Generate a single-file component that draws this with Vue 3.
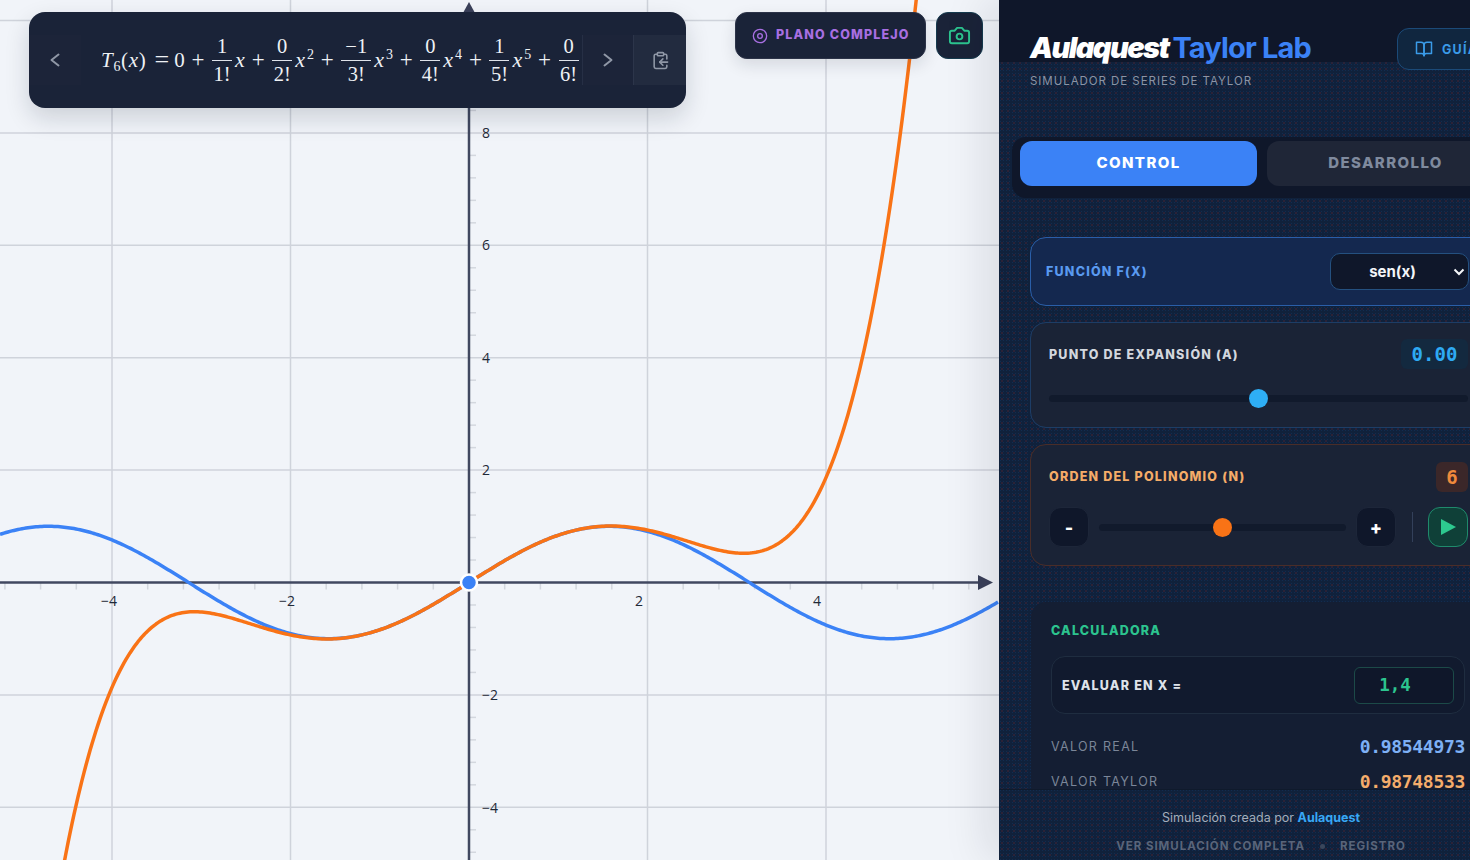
<script setup>
import { ref } from "vue";

const W = 999;
const H = 860;
const OX = 469;
const OY = 582.5;
const SX = 89.25;
const SY = 56.2;

const fn = ref("sen(x)");
const a = ref(0);
const n = ref(6);
const evalX = ref("1,4");

const terms = [
  { num: "1", den: "1!", pow: "" },
  { num: "0", den: "2!", pow: "2" },
  { num: "−1", den: "3!", pow: "3" },
  { num: "0", den: "4!", pow: "4" },
  { num: "1", den: "5!", pow: "5" },
];

function curve(f) {
  let d = "";
  for (let px = 0; px <= W; px += 2) {
    const x = (px - OX) / SX;
    const y = Math.max(-60, Math.min(H + 60, OY - f(x) * SY));
    d += (px === 0 ? "M" : "L") + px + " " + y.toFixed(2);
  }
  return d;
}

const sinPath = curve(Math.sin);
const taylorPath = curve((x) => x - x ** 3 / 6 + x ** 5 / 120);

const gridX = [-4, -2, 2, 4].map((v) => OX + v * SX);
const gridY = [10, 8, 6, 4, 2, -2, -4].map((v) => OY - v * SY);

const ticksX = [];
for (let i = -13; i <= 14; i++) {
  if (i !== 0 && i % 5 !== 0) ticksX.push(OX + i * 0.4 * SX);
}
const ticksY = [];
for (let i = -12; i <= 25; i++) {
  if (i !== 0 && i % 5 !== 0) ticksY.push(OY - i * 0.4 * SY);
}

const labelsX = [
  { t: "−4", x: 109 },
  { t: "−2", x: 287 },
  { t: "2", x: 639 },
  { t: "4", x: 817 },
];
const labelsY = [
  { t: "8", x: 486, y: 133 },
  { t: "6", x: 486, y: 245 },
  { t: "4", x: 486, y: 358 },
  { t: "2", x: 486, y: 470 },
  { t: "−2", x: 490, y: 695 },
  { t: "−4", x: 490, y: 808 },
];
</script>

<template>
  <div class="page">
    <main class="canvas">
      <svg class="graph" :width="W" :height="H" :viewBox="`0 0 ${W} ${H}`">
        <line v-for="x in gridX" :key="x" :x1="x" :x2="x" y1="0" :y2="H" class="grid" />
        <line v-for="y in gridY" :key="y" x1="0" :x2="W" :y1="y" :y2="y" class="grid" />
        <line v-for="x in ticksX" :key="x" :x1="x" :x2="x" :y1="OY" :y2="OY + 7" class="tick" />
        <line v-for="y in ticksY" :key="y" :x1="OX" :x2="OX + 7" :y1="y" :y2="y" class="tick" />
        <line x1="0" :x2="980" :y1="OY" :y2="OY" class="axis" />
        <line :x1="OX" :x2="OX" y1="10" :y2="H" class="axis" />
        <polygon points="978,575 993,582.5 978,590" class="arrow" />
        <polygon points="469,2 463,13 475,13" class="arrow" />
        <text v-for="l in labelsX" :key="l.t" :x="l.x" y="606" class="num">{{ l.t }}</text>
        <text v-for="l in labelsY" :key="l.t" :x="l.x" :y="l.y + 5" class="num">{{ l.t }}</text>
        <path :d="sinPath" class="line-sin" />
        <path :d="taylorPath" class="line-taylor" />
        <circle :cx="OX" :cy="OY" r="8" class="origin" />
      </svg>

      <div class="overlay">
        <div class="formula-card">
          <button class="f-btn" type="button">
            <svg width="24" height="24" viewBox="0 0 24 24"><path d="M15.5 6.5 8.5 12l7 5.5" /></svg>
          </button>
          <div class="formula">
            <span class="m-t"><i>T</i><sub>6</sub>(<i>x</i>)</span>
            <span class="eq">=</span>
            <span class="zero">0</span>
            <template v-for="t in terms" :key="t.den">
              <span class="plus">+</span>
              <span class="frac">
                <span class="fnum">{{ t.num }}</span>
                <span class="fden">{{ t.den }}</span>
              </span>
              <span class="xvar"><i>x</i><sup v-if="t.pow">{{ t.pow }}</sup></span>
            </template>
            <span class="plus">+</span>
            <span class="frac">
              <span class="fnum">0</span>
              <span class="fden">6!</span>
            </span>
          </div>
          <button class="f-btn f-next" type="button">
            <svg width="24" height="24" viewBox="0 0 24 24"><path d="M8.5 6.5 15.5 12l-7 5.5" /></svg>
          </button>
          <button class="f-btn f-copy" type="button">
            <svg width="19" height="19" viewBox="0 0 24 24">
              <rect x="8" y="2" width="8" height="4" rx="1" ry="1" />
              <path d="M8 4H6a2 2 0 0 0-2 2v14a2 2 0 0 0 2 2h12a2 2 0 0 0 2-2v-2" />
              <path d="M16 4h2a2 2 0 0 1 2 2v4" />
              <path d="M21 14H11" />
              <path d="m15 10-4 4 4 4" />
            </svg>
          </button>
        </div>
        <div class="tools">
          <button class="plano" type="button">
            <svg width="16" height="16" viewBox="0 0 24 24">
              <circle cx="12" cy="12" r="10" />
              <circle cx="12" cy="12" r="3.5" />
            </svg>
            <span>PLANO COMPLEJO</span>
          </button>
          <button class="camera" type="button">
            <svg width="23" height="23" viewBox="0 0 24 24">
              <path d="M14.5 4h-5L7 7H4a2 2 0 0 0-2 2v9a2 2 0 0 0 2 2h16a2 2 0 0 0 2-2V9a2 2 0 0 0-2-2h-3l-2.5-3z" />
              <circle cx="12" cy="13" r="3" />
            </svg>
          </button>
        </div>
      </div>
    </main>

    <aside class="panel">
      <header class="head">
        <div>
          <h1 class="title"><em>Aulaquest</em><span>Taylor Lab</span></h1>
          <p class="subtitle">SIMULADOR DE SERIES DE TAYLOR</p>
        </div>
        <button class="guide" type="button">
          <svg width="18" height="18" viewBox="0 0 24 24">
            <path d="M2 3h6a4 4 0 0 1 4 4v14a3 3 0 0 0-3-3H2z" />
            <path d="M22 3h-6a4 4 0 0 0-4 4v14a3 3 0 0 1 3-3h7z" />
          </svg>
          GUÍA
        </button>
      </header>

      <div class="tabs">
        <button class="tab active" type="button">CONTROL</button>
        <button class="tab" type="button">DESARROLLO</button>
      </div>

      <div class="scroll">
        <section class="card card-fn">
          <label class="lbl lbl-fn">FUNCIÓN F(X)</label>
          <div class="select-wrap">
            <select v-model="fn" class="select">
              <option>sen(x)</option>
              <option>cos(x)</option>
              <option>e^x</option>
            </select>
            <svg class="select-chev" width="12" height="12" viewBox="0 0 12 12"><path d="M1.5 3.5 6 8l4.5-4.5" /></svg>
          </div>
        </section>

        <section class="card card-a">
          <div class="row">
            <span class="lbl lbl-a">PUNTO DE EXPANSIÓN (A)</span>
            <span class="val val-a">{{ Number(a).toFixed(2) }}</span>
          </div>
          <input v-model="a" class="range range-a" type="range" min="-5" max="5" step="0.01" />
        </section>

        <section class="card card-n">
          <div class="row">
            <span class="lbl lbl-n">ORDEN DEL POLINOMIO (N)</span>
            <span class="val val-n">{{ n }}</span>
          </div>
          <div class="n-ctrl">
            <button class="step" type="button" @click="n = Math.max(0, Number(n) - 1)">-</button>
            <input v-model="n" class="range range-n" type="range" min="0" max="12" step="1" />
            <button class="step" type="button" @click="n = Math.min(12, Number(n) + 1)">+</button>
            <span class="sep"></span>
            <button class="play" type="button">
              <svg width="18" height="18" viewBox="0 0 18 18"><polygon points="2,1 17,9 2,17" /></svg>
            </button>
          </div>
        </section>

        <section class="calc">
          <h2 class="calc-title">CALCULADORA</h2>
          <div class="eval">
            <span class="eval-lbl">EVALUAR EN X =</span>
            <input v-model="evalX" class="eval-in" type="text" />
          </div>
          <div class="res">
            <span>VALOR REAL</span>
            <b class="res-real">0.98544973</b>
          </div>
          <div class="res">
            <span>VALOR TAYLOR</span>
            <b class="res-taylor">0.98748533</b>
          </div>
        </section>
      </div>

      <footer class="foot">
        <p class="credit">Simulación creada por <b>Aulaquest</b></p>
        <p class="links">
          <span>VER SIMULACIÓN COMPLETA</span>
          <i class="dot"></i>
          <span>REGISTRO</span>
        </p>
      </footer>
    </aside>
  </div>
</template>

<style scoped>
.page {
  display: flex;
  width: 1470px;
  height: 860px;
  overflow: hidden;
  font-family: Inter, "Liberation Sans", sans-serif;
  background: #f1f4f9;
}
.canvas {
  position: relative;
  flex: 0 0 999px;
  height: 860px;
  overflow: hidden;
}
.graph {
  display: block;
}
.grid {
  stroke: #cfd3db;
  stroke-width: 1.5;
}
.tick {
  stroke: #d3d7de;
  stroke-width: 1.5;
}
.axis {
  stroke: #414860;
  stroke-width: 2.5;
}
.arrow {
  fill: #3a4059;
}
.num {
  font-family: "Open Sans", "Noto Sans", sans-serif;
  font-size: 14px;
  fill: #1f2937;
  text-anchor: middle;
}
.line-sin,
.line-taylor {
  fill: none;
  stroke-width: 3.5;
  stroke-linejoin: round;
}
.line-sin {
  stroke: #3b82f6;
}
.line-taylor {
  stroke: #f97316;
}
.origin {
  fill: #3b82f6;
  stroke: #fff;
  stroke-width: 2.5;
}

.overlay {
  position: absolute;
  top: 12px;
  left: 29px;
  right: 16px;
  display: flex;
  justify-content: space-between;
  align-items: flex-start;
}
.formula-card {
  display: flex;
  align-items: center;
  width: 657px;
  height: 96px;
  background: #1a2338;
  border-radius: 16px;
  box-shadow: 0 10px 24px rgba(15, 23, 42, 0.16);
  overflow: hidden;
}
.f-btn {
  flex: 0 0 52px;
  height: 50px;
  display: flex;
  align-items: center;
  justify-content: center;
  border: 0;
  padding: 0;
  background: #1c2439;
  color: #8f97a6;
}
.f-btn svg,
.plano svg,
.camera svg,
.guide svg {
  fill: none;
  stroke: currentColor;
  stroke-width: 2;
  stroke-linecap: round;
  stroke-linejoin: round;
}
.f-next {
  border-left: 1px solid #262f45;
  border-right: 1px solid #2c354a;
}
.f-copy {
  background: #222b3f;
}
.formula {
  flex: 1;
  min-width: 0;
  display: flex;
  align-items: center;
  padding-left: 20px;
  overflow: hidden;
  font-family: "Liberation Serif", "DejaVu Serif", serif;
  font-size: 21px;
  color: #eef1f5;
  white-space: nowrap;
}
.m-t {
  letter-spacing: 0.7px;
}
.m-t sub {
  font-size: 14px;
  line-height: 0;
  vertical-align: -4px;
}
.eq {
  margin: 0 5px 0 8px;
  font-size: 26px;
  line-height: 24px;
}
.plus {
  margin: 0 7.6px 0 6.8px;
  font-size: 23px;
}
.frac {
  display: inline-flex;
  flex-direction: column;
  align-items: center;
  min-width: 20px;
  line-height: 20px;
  font-size: 20.5px;
}
.fnum {
  align-self: stretch;
  text-align: center;
  padding: 0 4px 4px;
  border-bottom: 1px solid #dfe3ea;
}
.fden {
  padding-top: 3px;
}
.xvar {
  margin-left: 3px;
  font-size: 22px;
}
.xvar sup {
  font-size: 14px;
  line-height: 0;
  vertical-align: 8px;
  margin-left: 2px;
}
.tools {
  display: flex;
  gap: 10px;
}
.plano {
  display: flex;
  align-items: center;
  gap: 8px;
  width: 191px;
  height: 47px;
  padding: 0 0 0 16px;
  border: 1px solid #2c3348;
  border-radius: 12px;
  background: #1a2338;
  color: #a86fe2;
  font-family: Inter, "Liberation Sans", sans-serif;
  font-size: 12.5px;
  font-weight: 800;
  letter-spacing: 1.15px;
  white-space: nowrap;
  box-shadow: 0 6px 16px rgba(15, 23, 42, 0.12);
}
.plano span {
  padding-bottom: 2px;
}
.camera {
  display: flex;
  align-items: center;
  justify-content: center;
  width: 47px;
  height: 47px;
  padding: 0;
  border: 1px solid #153a4e;
  border-radius: 12px;
  background: #1a2338;
  color: #2cc48f;
}

.panel {
  position: relative;
  flex: 0 0 524px;
  height: 860px;
  display: flex;
  flex-direction: column;
  color: #fff;
  background-color: #10213b;
  background-image:
    radial-gradient(circle, rgba(110, 40, 46, 0.45) 0.6px, transparent 0.9px),
    radial-gradient(circle, rgba(20, 52, 94, 0.6) 0.7px, transparent 1px);
  background-size: 6px 6px, 3px 3px;
  box-shadow: -14px 0 40px rgba(15, 23, 42, 0.1);
}
.head {
  flex: 0 0 137px;
  box-sizing: border-box;
  display: flex;
  justify-content: space-between;
  align-items: flex-start;
  padding: 28px 19px 0 31px;
  background: linear-gradient(#0f172a 62px, transparent 62px);
}
.title {
  margin: 0;
  font-size: 29px;
  line-height: 40px;
  font-weight: 700;
  letter-spacing: -0.85px;
  white-space: nowrap;
}
.title em {
  margin-right: 4px;
  font-weight: 900;
  font-style: italic;
  color: #fff;
  letter-spacing: -1.6px;
}
.title span {
  color: #3b82f6;
}
.subtitle {
  margin: 5px 0 0;
  font-size: 11.5px;
  line-height: 16px;
  letter-spacing: 0.95px;
  color: #8b94a5;
  white-space: nowrap;
}
.guide {
  display: flex;
  align-items: center;
  gap: 9px;
  width: 107px;
  height: 42px;
  padding: 0 0 0 17px;
  border: 1px solid #1b4a78;
  border-radius: 12px;
  background: #10263f;
  color: #3a9be8;
  font-family: Inter, "Liberation Sans", sans-serif;
  font-size: 12.5px;
  font-weight: 700;
  letter-spacing: 1.2px;
}
.tabs {
  flex: 0 0 61px;
  box-sizing: border-box;
  display: flex;
  gap: 10px;
  margin: 0 11px 0 13px;
  padding: 4px 8px 12px;
  border-radius: 14px;
  background: #0f172a;
}
.tab {
  flex: 1;
  padding: 0 0 2px;
  border: 0;
  border-radius: 12px;
  background: #1f2637;
  color: #7f8a9e;
  font-family: Inter, "Liberation Sans", sans-serif;
  font-size: 15px;
  font-weight: 800;
  letter-spacing: 1.4px;
}
.tab.active {
  background: #3b82f6;
  color: #fff;
}
.scroll {
  flex: 1;
  min-height: 0;
  overflow: hidden;
  display: flex;
  flex-direction: column;
  gap: 16px;
  padding: 39px 37px 0 31px;
}
.card {
  flex: none;
  border: 1px solid #1d3d66;
  border-radius: 16px;
  background: #1a2336;
  padding: 17px 17px 18px 18px;
}
.card-fn {
  display: flex;
  align-items: center;
  justify-content: space-between;
  padding: 15px 16px 15px 15px;
  background: #14284f;
  border-color: #2a5ea8;
}
.card-a {
  padding: 16px 17px 19px 18px;
}
.card-n {
  border-color: #4a2d28;
}
.row {
  display: flex;
  justify-content: space-between;
  align-items: center;
  height: 30px;
}
.lbl {
  font-size: 12.5px;
  font-weight: 800;
  letter-spacing: 1.22px;
  white-space: nowrap;
}
.lbl-fn {
  color: #5a9af0;
}
.lbl-a {
  color: #d3d7de;
}
.lbl-n {
  padding-bottom: 2px;
  color: #f5ac68;
}
.select-wrap {
  position: relative;
  display: flex;
}
.select {
  width: 139px;
  height: 37px;
  padding: 0 14px 0 0;
  border: 1px solid #24507f;
  border-radius: 10px;
  appearance: none;
  -webkit-appearance: none;
  background: #0f172a;
  color: #f4f6f9;
  font-family: Inter, "Liberation Sans", sans-serif;
  font-size: 15px;
  font-weight: 700;
  text-align: center;
  text-align-last: center;
}
.select-chev {
  position: absolute;
  top: 13px;
  right: 4px;
  pointer-events: none;
  fill: none;
  stroke: #f4f6f9;
  stroke-width: 2;
}
.val {
  display: flex;
  align-items: center;
  justify-content: center;
  height: 30px;
  border-radius: 6px;
  font-family: "DejaVu Sans Mono", "Liberation Mono", monospace;
  font-weight: 700;
}
.val-a {
  width: 67px;
  background: #13293f;
  color: #2eaaf3;
  font-size: 19px;
}
.val-n {
  width: 32px;
  background: #3b2729;
  color: #f08a3c;
  font-size: 19px;
}
.range {
  display: block;
  width: 100%;
  height: 19px;
  margin: 0;
  appearance: none;
  -webkit-appearance: none;
  background: transparent;
}
.range::-webkit-slider-runnable-track {
  height: 7px;
  border-radius: 4px;
  background: #111a2c;
}
.range::-webkit-slider-thumb {
  -webkit-appearance: none;
  width: 19px;
  height: 19px;
  margin-top: -6px;
  border-radius: 50%;
}
.range-a {
  margin-top: 20px;
}
.range-a::-webkit-slider-thumb {
  background: #2eaef5;
}
.range-n::-webkit-slider-thumb {
  background: #f97316;
}
.n-ctrl {
  display: flex;
  align-items: center;
  margin-top: 15px;
}
.range-n {
  flex: 1;
  min-width: 0;
  margin: 0 10px;
}
.step {
  flex: 0 0 40px;
  height: 40px;
  padding: 0;
  border: 1px solid #1d2639;
  border-radius: 12px;
  background: #0f172a;
  color: #fff;
  font-family: Inter, "Liberation Sans", sans-serif;
  font-size: 18px;
  font-weight: 800;
}
.sep {
  flex: 0 0 1px;
  height: 30px;
  margin: 0 15px 0 16px;
  background: #33405a;
}
.play {
  flex: 0 0 40px;
  height: 40px;
  display: flex;
  align-items: center;
  justify-content: center;
  padding: 0;
  border: 1px solid #1f8a6c;
  border-radius: 12px;
  background: #0f4038;
}
.play polygon {
  fill: #2dc98f;
}
.calc {
  flex: none;
  margin: 20px 1px 0;
  padding: 20px;
  border-radius: 16px;
  background: #141e33;
}
.calc-title {
  margin: 0 0 16px;
  font-size: 12.5px;
  line-height: 18px;
  font-weight: 800;
  letter-spacing: 1.2px;
  color: #2cc48f;
}
.eval {
  display: flex;
  align-items: center;
  justify-content: space-between;
  height: 58px;
  padding: 0 10px;
  border: 1px solid #1f2d40;
  border-radius: 14px;
  background: #111a2e;
  box-sizing: border-box;
}
.eval-lbl {
  font-size: 12.5px;
  font-weight: 800;
  letter-spacing: 1.22px;
  color: #dfe3ea;
}
.eval-in {
  width: 100px;
  height: 37px;
  box-sizing: border-box;
  padding: 0 18px 0 0;
  border: 1px solid #1c4a48;
  border-radius: 6px;
  background: #0f172a;
  color: #2cc48f;
  font-family: "DejaVu Sans Mono", monospace;
  font-size: 17.5px;
  font-weight: 700;
  text-align: center;
  outline: none;
}
.res {
  display: flex;
  justify-content: space-between;
  align-items: center;
  height: 22px;
  margin-top: 13px;
  font-size: 12.5px;
  letter-spacing: 1.3px;
  color: #7b8698;
}
.eval + .res {
  margin-top: 21px;
}
.res b {
  font-family: "DejaVu Sans Mono", monospace;
  font-size: 18px;
  letter-spacing: -0.3px;
}
.res-real {
  color: #7eb0f5;
}
.res-taylor {
  color: #f5ad6b;
}
.foot {
  position: relative;
  flex: 0 0 71px;
  box-sizing: border-box;
  padding-top: 18px;
  border-top: 1px solid #0f1a2c;
  text-align: center;
}
.credit {
  margin: 0;
  font-size: 12.5px;
  line-height: 19px;
  color: #a4adba;
}
.credit b {
  color: #38a8f5;
  font-weight: 700;
}
.links {
  display: flex;
  justify-content: center;
  align-items: center;
  gap: 15px;
  margin: 10px 0 0;
  font-size: 11.5px;
  line-height: 18px;
  font-weight: 700;
  letter-spacing: 0.96px;
  color: #59657a;
}
.dot {
  width: 5px;
  height: 5px;
  border-radius: 50%;
  background: #3a465b;
}
</style>

<style>
html,
body {
  margin: 0;
  overflow: hidden;
}
</style>
